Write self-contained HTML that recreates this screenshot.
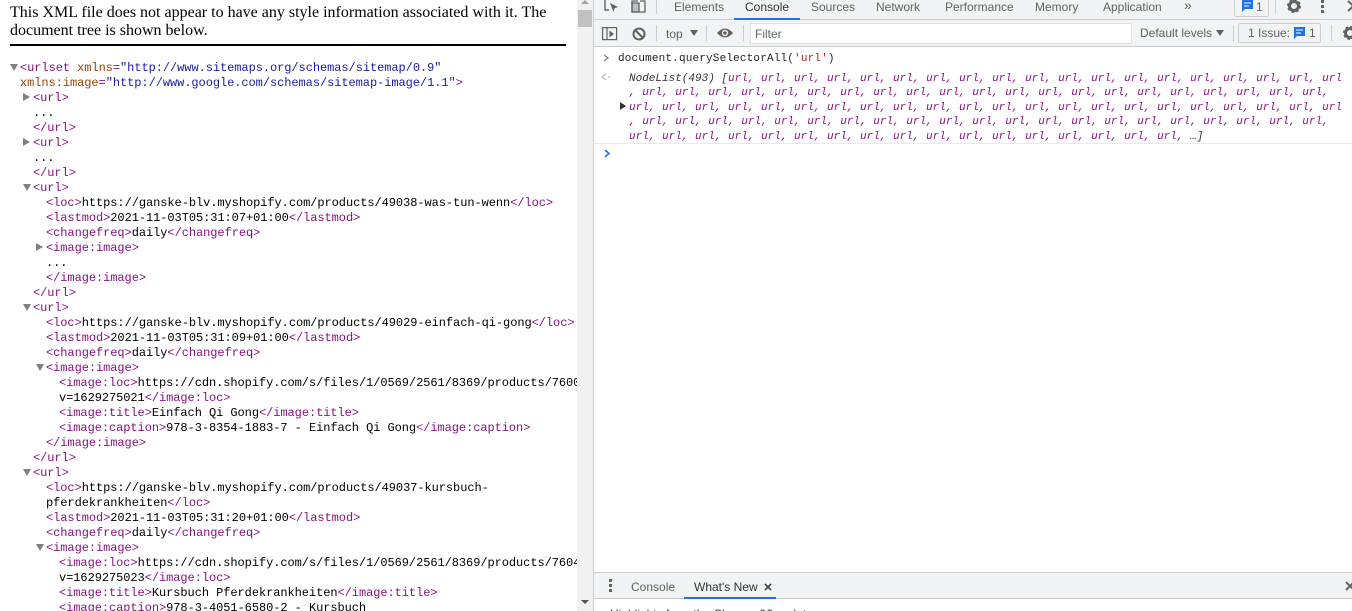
<!DOCTYPE html>
<html><head><meta charset="utf-8"><style>
html,body{margin:0;padding:0;width:1352px;height:611px;overflow:hidden;background:#fff}
#left{position:absolute;left:0;top:0;width:577px;height:611px;overflow:hidden}
.h{position:absolute;left:10px;font:16px/18px "Liberation Serif",serif;color:#000;white-space:pre}
.l{position:absolute;margin-top:1px;font:12px/15px "Liberation Mono",monospace;letter-spacing:-.06px;color:#000;white-space:pre}
.l i{font-style:normal;color:#881280}.l b{font-weight:normal;color:#994500}.l u{text-decoration:none;color:#1a1aa6}
.t{position:absolute;width:0;height:0}
.d{border-left:4px solid transparent;border-right:4px solid transparent;border-top:7px solid #808080}
.r{border-top:4px solid transparent;border-bottom:4px solid transparent;border-left:7px solid #808080}
#sb{position:absolute;left:577px;top:0;width:16px;height:611px;background:#f1f1f1}
#dt{position:absolute;left:593px;top:0;width:759px;height:611px;background:#fff;border-left:1px solid #ccc;box-sizing:border-box;overflow:hidden}
.bar{position:absolute;left:0;width:759px;background:#f1f3f4}
.s{position:absolute;font:12px/16px "Liberation Sans",sans-serif;color:#5f6368;white-space:pre}
.c{position:absolute;font:11px/15px "Liberation Mono",monospace;white-space:pre}
.o{font-style:italic;color:#881280}
.hl{position:absolute;height:1px;background:#cacdd1}
svg{position:absolute;overflow:visible}
</style></head><body>
<div id="left">
<div class="h" style="top:4px">This XML file does not appear to have any style information associated with it. The</div>
<div class="h" style="top:22px">document tree is shown below.</div>
<div style="position:absolute;left:10px;top:44px;width:556px;height:2px;background:#000"></div>
<div class="t d" style="left:10px;top:64px"></div>
<div class="l" style="left:20px;top:60px"><i>&lt;urlset</i> <b>xmlns</b><i>=</i><u>"http://www.sitemaps.org/schemas/sitemap/0.9"</u></div>
<div class="l" style="left:20px;top:75px"><b>xmlns:image</b><i>=</i><u>"http://www.google.com/schemas/sitemap-image/1.1"</u><i>&gt;</i></div>
<div class="t r" style="left:23px;top:93px"></div>
<div class="l" style="left:33px;top:90px"><i>&lt;url&gt;</i></div>
<div class="l" style="left:33px;top:105px">...</div>
<div class="l" style="left:33px;top:120px"><i>&lt;/url&gt;</i></div>
<div class="t r" style="left:23px;top:138px"></div>
<div class="l" style="left:33px;top:135px"><i>&lt;url&gt;</i></div>
<div class="l" style="left:33px;top:150px">...</div>
<div class="l" style="left:33px;top:165px"><i>&lt;/url&gt;</i></div>
<div class="t d" style="left:23px;top:184px"></div>
<div class="l" style="left:33px;top:180px"><i>&lt;url&gt;</i></div>
<div class="l" style="left:46px;top:195px"><i>&lt;loc&gt;</i>https://ganske-blv.myshopify.com/products/49038-was-tun-wenn<i>&lt;/loc&gt;</i></div>
<div class="l" style="left:46px;top:210px"><i>&lt;lastmod&gt;</i>2021-11-03T05:31:07+01:00<i>&lt;/lastmod&gt;</i></div>
<div class="l" style="left:46px;top:225px"><i>&lt;changefreq&gt;</i>daily<i>&lt;/changefreq&gt;</i></div>
<div class="t r" style="left:36px;top:243px"></div>
<div class="l" style="left:46px;top:240px"><i>&lt;image:image&gt;</i></div>
<div class="l" style="left:46px;top:255px">...</div>
<div class="l" style="left:46px;top:270px"><i>&lt;/image:image&gt;</i></div>
<div class="l" style="left:33px;top:285px"><i>&lt;/url&gt;</i></div>
<div class="t d" style="left:23px;top:304px"></div>
<div class="l" style="left:33px;top:300px"><i>&lt;url&gt;</i></div>
<div class="l" style="left:46px;top:315px"><i>&lt;loc&gt;</i>https://ganske-blv.myshopify.com/products/49029-einfach-qi-gong<i>&lt;/loc&gt;</i></div>
<div class="l" style="left:46px;top:330px"><i>&lt;lastmod&gt;</i>2021-11-03T05:31:09+01:00<i>&lt;/lastmod&gt;</i></div>
<div class="l" style="left:46px;top:345px"><i>&lt;changefreq&gt;</i>daily<i>&lt;/changefreq&gt;</i></div>
<div class="t d" style="left:36px;top:364px"></div>
<div class="l" style="left:46px;top:360px"><i>&lt;image:image&gt;</i></div>
<div class="l" style="left:59px;top:375px"><i>&lt;image:loc&gt;</i>https://cdn.shopify.com/s/files/1/0569/2561/8369/products/7600</div>
<div class="l" style="left:59px;top:390px">v=1629275021<i>&lt;/image:loc&gt;</i></div>
<div class="l" style="left:59px;top:405px"><i>&lt;image:title&gt;</i>Einfach Qi Gong<i>&lt;/image:title&gt;</i></div>
<div class="l" style="left:59px;top:420px"><i>&lt;image:caption&gt;</i>978-3-8354-1883-7 - Einfach Qi Gong<i>&lt;/image:caption&gt;</i></div>
<div class="l" style="left:46px;top:435px"><i>&lt;/image:image&gt;</i></div>
<div class="l" style="left:33px;top:450px"><i>&lt;/url&gt;</i></div>
<div class="t d" style="left:23px;top:469px"></div>
<div class="l" style="left:33px;top:465px"><i>&lt;url&gt;</i></div>
<div class="l" style="left:46px;top:480px"><i>&lt;loc&gt;</i>https://ganske-blv.myshopify.com/products/49037-kursbuch-</div>
<div class="l" style="left:46px;top:495px">pferdekrankheiten<i>&lt;/loc&gt;</i></div>
<div class="l" style="left:46px;top:510px"><i>&lt;lastmod&gt;</i>2021-11-03T05:31:20+01:00<i>&lt;/lastmod&gt;</i></div>
<div class="l" style="left:46px;top:525px"><i>&lt;changefreq&gt;</i>daily<i>&lt;/changefreq&gt;</i></div>
<div class="t d" style="left:36px;top:544px"></div>
<div class="l" style="left:46px;top:540px"><i>&lt;image:image&gt;</i></div>
<div class="l" style="left:59px;top:555px"><i>&lt;image:loc&gt;</i>https://cdn.shopify.com/s/files/1/0569/2561/8369/products/7604</div>
<div class="l" style="left:59px;top:570px">v=1629275023<i>&lt;/image:loc&gt;</i></div>
<div class="l" style="left:59px;top:585px"><i>&lt;image:title&gt;</i>Kursbuch Pferdekrankheiten<i>&lt;/image:title&gt;</i></div>
<div class="l" style="left:59px;top:600px"><i>&lt;image:caption&gt;</i>978-3-4051-6580-2 - Kursbuch</div>
</div>
<div id="sb">
<div style="position:absolute;left:1px;top:10px;width:14px;height:17px;background:#c1c1c1"></div>
<div class="t" style="left:4px;top:0;border-left:4px solid transparent;border-right:4px solid transparent;border-bottom:4px solid #a3a3a3"></div>
<div class="t" style="left:4px;top:600px;border-left:4px solid transparent;border-right:4px solid transparent;border-top:4px solid #505050"></div>
</div>
<div id="dt">
<div class="bar" style="top:0;height:19px;border-bottom:1px solid #cacdd1"></div>
<div class="bar" style="top:20px;height:26px;border-bottom:1px solid #cacdd1"></div>
<svg style="left:10px;top:0" width="20" height="14" fill="none" stroke="#5f6368" stroke-width="1.4"><path d="M1 0V10H5M1 0"/><path d="M6 3L14 7L10.5 8.2L9.5 12Z" fill="#5f6368" stroke="none"/></svg>
<svg style="left:37px;top:0" width="20" height="14" fill="none" stroke="#5f6368" stroke-width="1.3"><path d="M7 1H1V12H14V1H9"/><path d="M1 3H8V12H1Z" fill="#5f6368" fill-opacity=".35"/></svg>
<div style="position:absolute;left:62px;top:0;width:1px;height:14px;background:#cacdd1"></div>
<div class="s" style="left:80px;top:-1px">Elements</div>
<div class="s" style="left:151px;top:-1px;color:#333">Console</div>
<div style="position:absolute;left:140px;top:18px;width:66px;height:2px;background:#1a73e8"></div>
<div class="s" style="left:217px;top:-1px">Sources</div>
<div class="s" style="left:282px;top:-1px">Network</div>
<div class="s" style="left:351px;top:-1px">Performance</div>
<div class="s" style="left:441px;top:-1px">Memory</div>
<div class="s" style="left:509px;top:-1px">Application</div>
<div class="s" style="left:590px;top:-3px;font-size:14px">»</div>
<div style="position:absolute;left:640px;top:-2px;width:33px;height:17px;border:1px solid #cacdd1;border-radius:2px;box-sizing:content-box"></div>
<svg style="left:648px;top:0" width="12" height="12"><path d="M0 0H11V9H3L0 12Z" fill="#1a73e8"/><path d="M2 3H9M2 6H7" stroke="#fff"/></svg>
<div class="s" style="left:662px;top:-1px">1</div>
<div style="position:absolute;left:681px;top:0;width:1px;height:14px;background:#cacdd1"></div>
<svg style="left:693px;top:0" width="15" height="14"><circle cx="7" cy="6" r="4.5" fill="none" stroke="#5f6368" stroke-width="3"/><circle cx="7" cy="6" r="6" fill="none" stroke="#5f6368" stroke-width="2" stroke-dasharray="2.5 2.2"/></svg>
<svg style="left:727px;top:0" width="4" height="14" fill="#5f6368"><rect x="0" y="0" width="3" height="3"/><rect x="0" y="5" width="3" height="3"/><rect x="0" y="10" width="3" height="3"/></svg>
<svg style="left:753px;top:0" width="12" height="12" stroke="#5f6368" stroke-width="2"><path d="M1 1L12 11M12 1L1 11"/></svg>

<svg style="left:8px;top:27px" width="16" height="14" fill="none" stroke="#5f6368" stroke-width="1.2"><rect x=".6" y=".6" width="14" height="12"/><path d="M5 1V13"/><path d="M7.5 3.5L12 7L7.5 10.5Z" fill="#5f6368" stroke="none"/></svg>
<svg style="left:38px;top:27px" width="14" height="14" fill="none" stroke="#5f6368" stroke-width="2"><circle cx="7" cy="7" r="5.5"/><path d="M3 3L11 11"/></svg>
<div style="position:absolute;left:62px;top:25px;width:1px;height:16px;background:#cacdd1"></div>
<div class="s" style="left:72px;top:26px">top</div>
<div class="t" style="left:96px;top:30px;border-left:4px solid transparent;border-right:4px solid transparent;border-top:6px solid #5f6368"></div>
<div style="position:absolute;left:112px;top:25px;width:1px;height:16px;background:#cacdd1"></div>
<svg style="left:123px;top:27px" width="17" height="12"><path d="M0 6Q8 -3 16 6Q8 15 0 6Z" fill="#5f6368"/><circle cx="8" cy="6" r="3.2" fill="#f1f3f4"/><circle cx="8" cy="6" r="1.8" fill="#5f6368"/></svg>
<div style="position:absolute;left:149px;top:25px;width:1px;height:16px;background:#cacdd1"></div>
<div style="position:absolute;left:156px;top:23px;width:380px;height:19px;background:#fff;border:1px solid #dfe1e5;box-sizing:content-box"></div>
<div class="s" style="left:161px;top:26px">Filter</div>
<div class="s" style="left:546px;top:25px">Default levels</div>
<div class="t" style="left:622px;top:30px;border-left:4px solid transparent;border-right:4px solid transparent;border-top:6px solid #5f6368"></div>
<div style="position:absolute;left:639px;top:25px;width:1px;height:16px;background:#cacdd1"></div>
<div style="position:absolute;left:644px;top:23px;width:81px;height:18px;border:1px solid #cacdd1;border-radius:2px"></div>
<div class="s" style="left:654px;top:25px">1 Issue:</div>
<svg style="left:700px;top:27px" width="12" height="12"><path d="M0 0H11V9H3L0 12Z" fill="#1a73e8"/><path d="M2 3H9M2 6H7" stroke="#fff"/></svg>
<div class="s" style="left:715px;top:25px">1</div>
<div style="position:absolute;left:737px;top:25px;width:1px;height:16px;background:#cacdd1"></div>
<svg style="left:749px;top:27px" width="15" height="14"><circle cx="7" cy="6" r="4.5" fill="none" stroke="#5f6368" stroke-width="3"/><circle cx="7" cy="6" r="6" fill="none" stroke="#5f6368" stroke-width="2" stroke-dasharray="2.5 2.2"/></svg>

<svg style="left:9px;top:54px" width="7" height="8" fill="none" stroke="#777" stroke-width="1.2"><path d="M1 1L5 4L1 7"/></svg>
<div class="c" style="left:24px;top:52px;color:#222;letter-spacing:.17px">document.querySelectorAll(<span style="color:#c41a16">'url'</span>)</div>
<svg style="left:7px;top:73px" width="10" height="8" fill="none" stroke="#aaa" stroke-width="1"><path d="M5 1L1 4L5 7"/><path d="M7 4H9"/></svg>
<div class="c o" style="left:35px;top:72px"><span style="color:#333">NodeList(493) [</span>url, url, url, url, url, url, url, url, url, url, url, url, url, url, url, url, url, url, url</div>
<div class="c o" style="left:35px;top:86px">, url, url, url, url, url, url, url, url, url, url, url, url, url, url, url, url, url, url, url, url, url,</div>
<div class="t" style="left:26px;top:102px;border-top:4px solid transparent;border-bottom:4px solid transparent;border-left:6px solid #333"></div>
<div class="c o" style="left:35px;top:101px">url, url, url, url, url, url, url, url, url, url, url, url, url, url, url, url, url, url, url, url, url, url</div>
<div class="c o" style="left:35px;top:115px">, url, url, url, url, url, url, url, url, url, url, url, url, url, url, url, url, url, url, url, url, url,</div>
<div class="c o" style="left:35px;top:130px">url, url, url, url, url, url, url, url, url, url, url, url, url, url, url, url, url, <span style="color:#333">…]</span></div>
<div class="hl" style="left:0;top:143px;width:759px;background:#e8eaed"></div>
<svg style="left:10px;top:149px" width="7" height="9" fill="none" stroke="#1a73e8" stroke-width="1.6"><path d="M1 1L5 4.5L1 8"/></svg>

<div class="bar" style="top:572px;height:25px;border-top:1px solid #cacdd1;border-bottom:1px solid #cacdd1"></div>
<svg style="left:15px;top:579px" width="4" height="14" fill="#5f6368"><rect x="0" y="0" width="3" height="3"/><rect x="0" y="5" width="3" height="3"/><rect x="0" y="10" width="3" height="3"/></svg>
<div class="s" style="left:37px;top:579px">Console</div>
<div class="s" style="left:100px;top:579px;color:#333">What's New</div>
<svg style="left:170px;top:583px" width="8" height="8" stroke="#444" stroke-width="1.6"><path d="M1 1L7 7M7 1L1 7"/></svg>
<div style="position:absolute;left:90px;top:597px;width:92px;height:2px;background:#1a73e8"></div>
<svg style="left:751px;top:581px" width="10" height="10" stroke="#5f6368" stroke-width="2"><path d="M1 1L9 9M9 1L1 9"/></svg>
<div class="s" style="left:16px;top:606px;color:#333">Highlights from the Chrome 96 update</div>
</div>
</body></html>
